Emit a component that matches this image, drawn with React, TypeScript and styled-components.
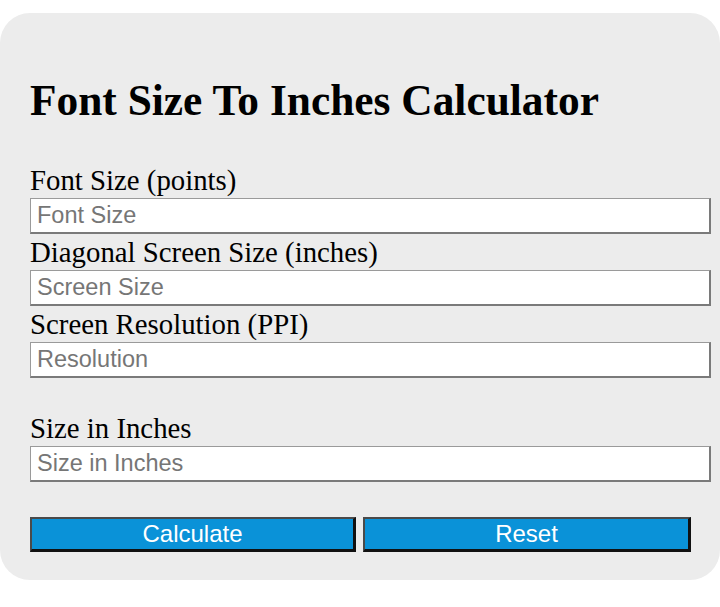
import React from "react";
import styled, { createGlobalStyle } from "styled-components";

const Global = createGlobalStyle`
  html, body { margin: 0; padding: 0; background: #ffffff; }
  body { font-family: "Liberation Serif", "Times New Roman", serif; }
`;

const Card = styled.div`
  box-sizing: border-box;
  margin-top: 13px;
  width: 720px;
  height: 567px;
  background: #ececec;
  border-radius: 30px;
  padding: 64px 9px 0 30px;
`;

const Title = styled.h1`
  margin: 0 0 38px 0;
  font-family: "Liberation Serif", "Times New Roman", serif;
  font-weight: bold;
  font-size: 43.4px;
  line-height: 47px;
  color: #000;
`;

const Label = styled.label`
  display: block;
  font-family: "Liberation Serif", "Times New Roman", serif;
  font-size: 28.8px;
  line-height: 36px;
  color: #000;
`;

const Field = styled.input`
  display: block;
  box-sizing: border-box;
  width: 100%;
  height: 36px;
  margin: 0;
  padding: 0 6px;
  background: #fff;
  border-style: solid;
  border-width: 1px 2px 2px 1px;
  border-color: #9a9a9a #7a7a7a #7a7a7a #9a9a9a;
  font-family: "Liberation Sans", Arial, sans-serif;
  font-size: 23.5px;
  color: #000;
  &::placeholder { color: #767676; }
`;

const Spacer = styled.div<{ h: number }>`
  height: ${(p) => p.h}px;
`;

const Buttons = styled.div`
  display: grid;
  grid-template-columns: 326px 328px;
  gap: 7px;
`;

const Btn = styled.button`
  box-sizing: border-box;
  height: 35px;
  margin: 0;
  padding: 0;
  background: #0a92d8;
  color: #fff;
  border-style: solid;
  border-width: 2px 3px 3px 2px;
  border-color: #4a4a4a #111 #111 #4a4a4a;
  font-family: "Liberation Sans", Arial, sans-serif;
  font-size: 24px;
  cursor: pointer;
`;

export default function App() {
  return (
    <>
      <Global />
      <Card>
        <Title>Font Size To Inches Calculator</Title>
        <Label>Font Size (points)</Label>
        <Field placeholder="Font Size" />
        <Label>Diagonal Screen Size (inches)</Label>
        <Field placeholder="Screen Size" />
        <Label>Screen Resolution (PPI)</Label>
        <Field placeholder="Resolution" />
        <Spacer h={32} />
        <Label>Size in Inches</Label>
        <Field placeholder="Size in Inches" />
        <Spacer h={35} />
        <Buttons>
          <Btn>Calculate</Btn>
          <Btn>Reset</Btn>
        </Buttons>
      </Card>
    </>
  );
}
